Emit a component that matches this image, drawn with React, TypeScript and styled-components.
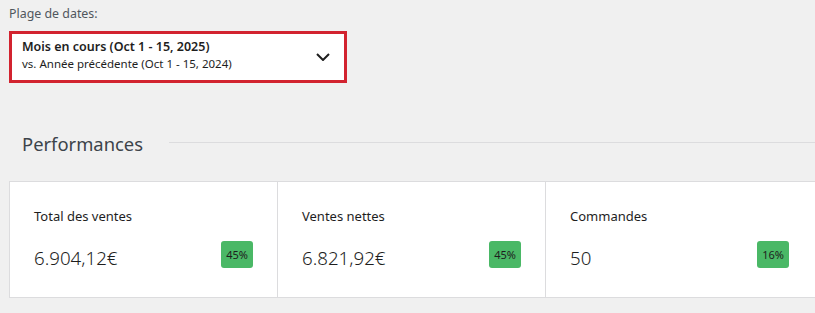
import React from "react";
import styled, { createGlobalStyle } from "styled-components";

const GlobalStyle = createGlobalStyle`
  html, body {
    margin: 0;
    padding: 0;
    background: #f0f0f0;
    overflow: hidden;
  }
  body {
    font-family: "Noto Sans", "Open Sans", sans-serif;
    color: #1e1e1e;
  }
`;

const Page = styled.div`
  width: 815px;
  height: 313px;
  background: #f0f0f0;
`;

const FieldLabel = styled.div`
  margin: 5px 0 0 9px;
  font-size: 12.4px;
  line-height: 18px;
  color: #50575e;
`;

const DateSelect = styled.button`
  margin: 8px 0 0 9px;
  width: 338px;
  height: 52px;
  box-sizing: border-box;
  border: 3px solid #d2232f;
  background: #fff;
  display: flex;
  align-items: flex-start;
  justify-content: space-between;
  padding: 4px 14px 0 10px;
  font-family: inherit;
  text-align: left;
  cursor: pointer;
`;

const SelectText = styled.div`
  display: flex;
  flex-direction: column;
`;

const Primary = styled.span`
  font-size: 12.5px;
  line-height: 18px;
  font-weight: 600;
  color: #1e1e1e;
`;

const Secondary = styled.span`
  font-size: 11.5px;
  line-height: 16px;
  color: #1e1e1e;
`;

const Chevron = styled.svg`
  width: 14px;
  height: 8px;
  margin-top: 15px;
  fill: none;
  stroke: #1e1e1e;
  stroke-width: 2;
`;

const SectionHeader = styled.div`
  margin: 47px 0 0 22px;
  display: flex;
  align-items: center;
  &::after {
    content: "";
    flex: 1;
    height: 1px;
    margin-left: 26px;
    margin-top: -4px;
    background: #dcdcde;
  }
`;

const SectionTitle = styled.h2`
  margin: 0;
  font-size: 18.4px;
  line-height: 28px;
  font-weight: 400;
  color: #3c434a;
`;

const Cards = styled.div`
  margin: 23px 0 0 9px;
  width: 807px;
  display: grid;
  grid-template-columns: 268px 268px 1fr;
  background: #fff;
  border: 1px solid #dcdcde;
  box-sizing: border-box;
`;

const Card = styled.div<{ $last?: boolean }>`
  padding: 25px ${(p) => (p.$last ? "26px" : "24px")} 29px 24px;
  border-right: ${(p) => (p.$last ? "none" : "1px solid #dcdcde")};
  box-sizing: border-box;
`;

const CardLabel = styled.div`
  font-size: 13px;
  line-height: 18px;
  color: #1e1e1e;
`;

const CardRow = styled.div`
  margin-top: 16px;
  display: flex;
  align-items: center;
  justify-content: space-between;
  height: 27px;
`;

const CardValue = styled.div`
  font-size: 18.7px;
  line-height: 27px;
  font-weight: 300;
  color: #1e1e1e;
  margin-top: 5px;
`;

const Delta = styled.span`
  width: 32px;
  height: 27px;
  border-radius: 3px;
  background: #4ab866;
  color: #1e1e1e;
  font-size: 11px;
  display: flex;
  align-items: center;
  justify-content: center;
`;

const stats = [
  { label: "Total des ventes", value: "6.904,12€", delta: "45%" },
  { label: "Ventes nettes", value: "6.821,92€", delta: "45%" },
  { label: "Commandes", value: "50", delta: "16%" },
];

const App = () => {
  return (
    <Page>
      <GlobalStyle />
      <FieldLabel>Plage de dates:</FieldLabel>
      <DateSelect>
        <SelectText>
          <Primary>Mois en cours (Oct 1 - 15, 2025)</Primary>
          <Secondary>vs. Année précédente (Oct 1 - 15, 2024)</Secondary>
        </SelectText>
        <Chevron viewBox="0 0 14 8">
          <polyline points="1,1 7,7 13,1" />
        </Chevron>
      </DateSelect>
      <SectionHeader>
        <SectionTitle>Performances</SectionTitle>
      </SectionHeader>
      <Cards>
        {stats.map((s, i) => (
          <Card key={s.label} $last={i === stats.length - 1}>
            <CardLabel>{s.label}</CardLabel>
            <CardRow>
              <CardValue>{s.value}</CardValue>
              <Delta>{s.delta}</Delta>
            </CardRow>
          </Card>
        ))}
      </Cards>
    </Page>
  );
};

export default App;
